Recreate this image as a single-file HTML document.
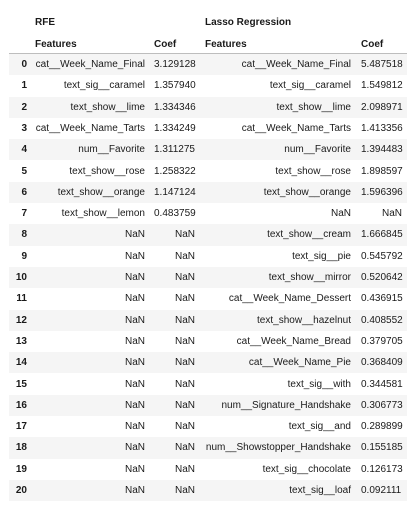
<!DOCTYPE html>
<html><head><style>
body{margin:0;width:420px;height:512px;background:#fff;font-family:"Liberation Sans",Arial,sans-serif;font-size:10px;color:#1a1a1a;position:relative;overflow:hidden}
.r{position:absolute;left:9px;width:398px;height:21.3px}
.s{background:#f5f5f5}
.c{position:absolute;top:0;line-height:21.3px;white-space:nowrap}
.i{left:0;width:18px;text-align:right;font-weight:bold}
.f1{left:0;width:136px;text-align:right}
.c1{left:145px}
.f2{left:0;width:342px;text-align:right}
.c2{left:352px}
.h{position:absolute;font-weight:bold;line-height:14px}
.line{position:absolute;left:9px;width:398px;top:53px;height:1px;background:#bdbdbd}
</style></head><body>
<div class="h" style="left:35px;top:16px">RFE</div>
<div class="h" style="left:205px;top:16px">Lasso Regression</div>
<div class="h" style="left:35px;top:38px">Features</div>
<div class="h" style="left:154px;top:38px">Coef</div>
<div class="h" style="left:205px;top:38px">Features</div>
<div class="h" style="left:361px;top:38px">Coef</div>
<div class="line"></div>
<div id="rows"></div>
<script>
var d=[["cat__Week_Name_Final","3.129128","cat__Week_Name_Final","5.487518"],
["text_sig__caramel","1.357940","text_sig__caramel","1.549812"],
["text_show__lime","1.334346","text_show__lime","2.098971"],
["cat__Week_Name_Tarts","1.334249","cat__Week_Name_Tarts","1.413356"],
["num__Favorite","1.311275","num__Favorite","1.394483"],
["text_show__rose","1.258322","text_show__rose","1.898597"],
["text_show__orange","1.147124","text_show__orange","1.596396"],
["text_show__lemon","0.483759","NaN","NaN"],
["NaN","NaN","text_show__cream","1.666845"],
["NaN","NaN","text_sig__pie","0.545792"],
["NaN","NaN","text_show__mirror","0.520642"],
["NaN","NaN","cat__Week_Name_Dessert","0.436915"],
["NaN","NaN","text_show__hazelnut","0.408552"],
["NaN","NaN","cat__Week_Name_Bread","0.379705"],
["NaN","NaN","cat__Week_Name_Pie","0.368409"],
["NaN","NaN","text_sig__with","0.344581"],
["NaN","NaN","num__Signature_Handshake","0.306773"],
["NaN","NaN","text_sig__and","0.289899"],
["NaN","NaN","num__Showstopper_Handshake","0.155185"],
["NaN","NaN","text_sig__chocolate","0.126173"],
["NaN","NaN","text_sig__loaf","0.092111"]];
var h="";
d.forEach(function(r,i){
var top=54+i*21.3;
var c1=r[1]=="NaN"?'style="left:145px;width:41px;text-align:right;position:absolute"':'';
var c2=r[3]=="NaN"?'style="left:352px;width:41px;text-align:right;position:absolute"':'';
h+='<div class="r'+(i%2==0?' s':'')+'" style="top:'+top+'px"><span class="c i">'+i+'</span><span class="c f1">'+r[0]+'</span><span class="c c1" '+c1+'>'+r[1]+'</span><span class="c f2">'+r[2]+'</span><span class="c c2" '+c2+'>'+r[3]+'</span></div>';
});
document.getElementById("rows").innerHTML=h;
</script>
</body></html>
